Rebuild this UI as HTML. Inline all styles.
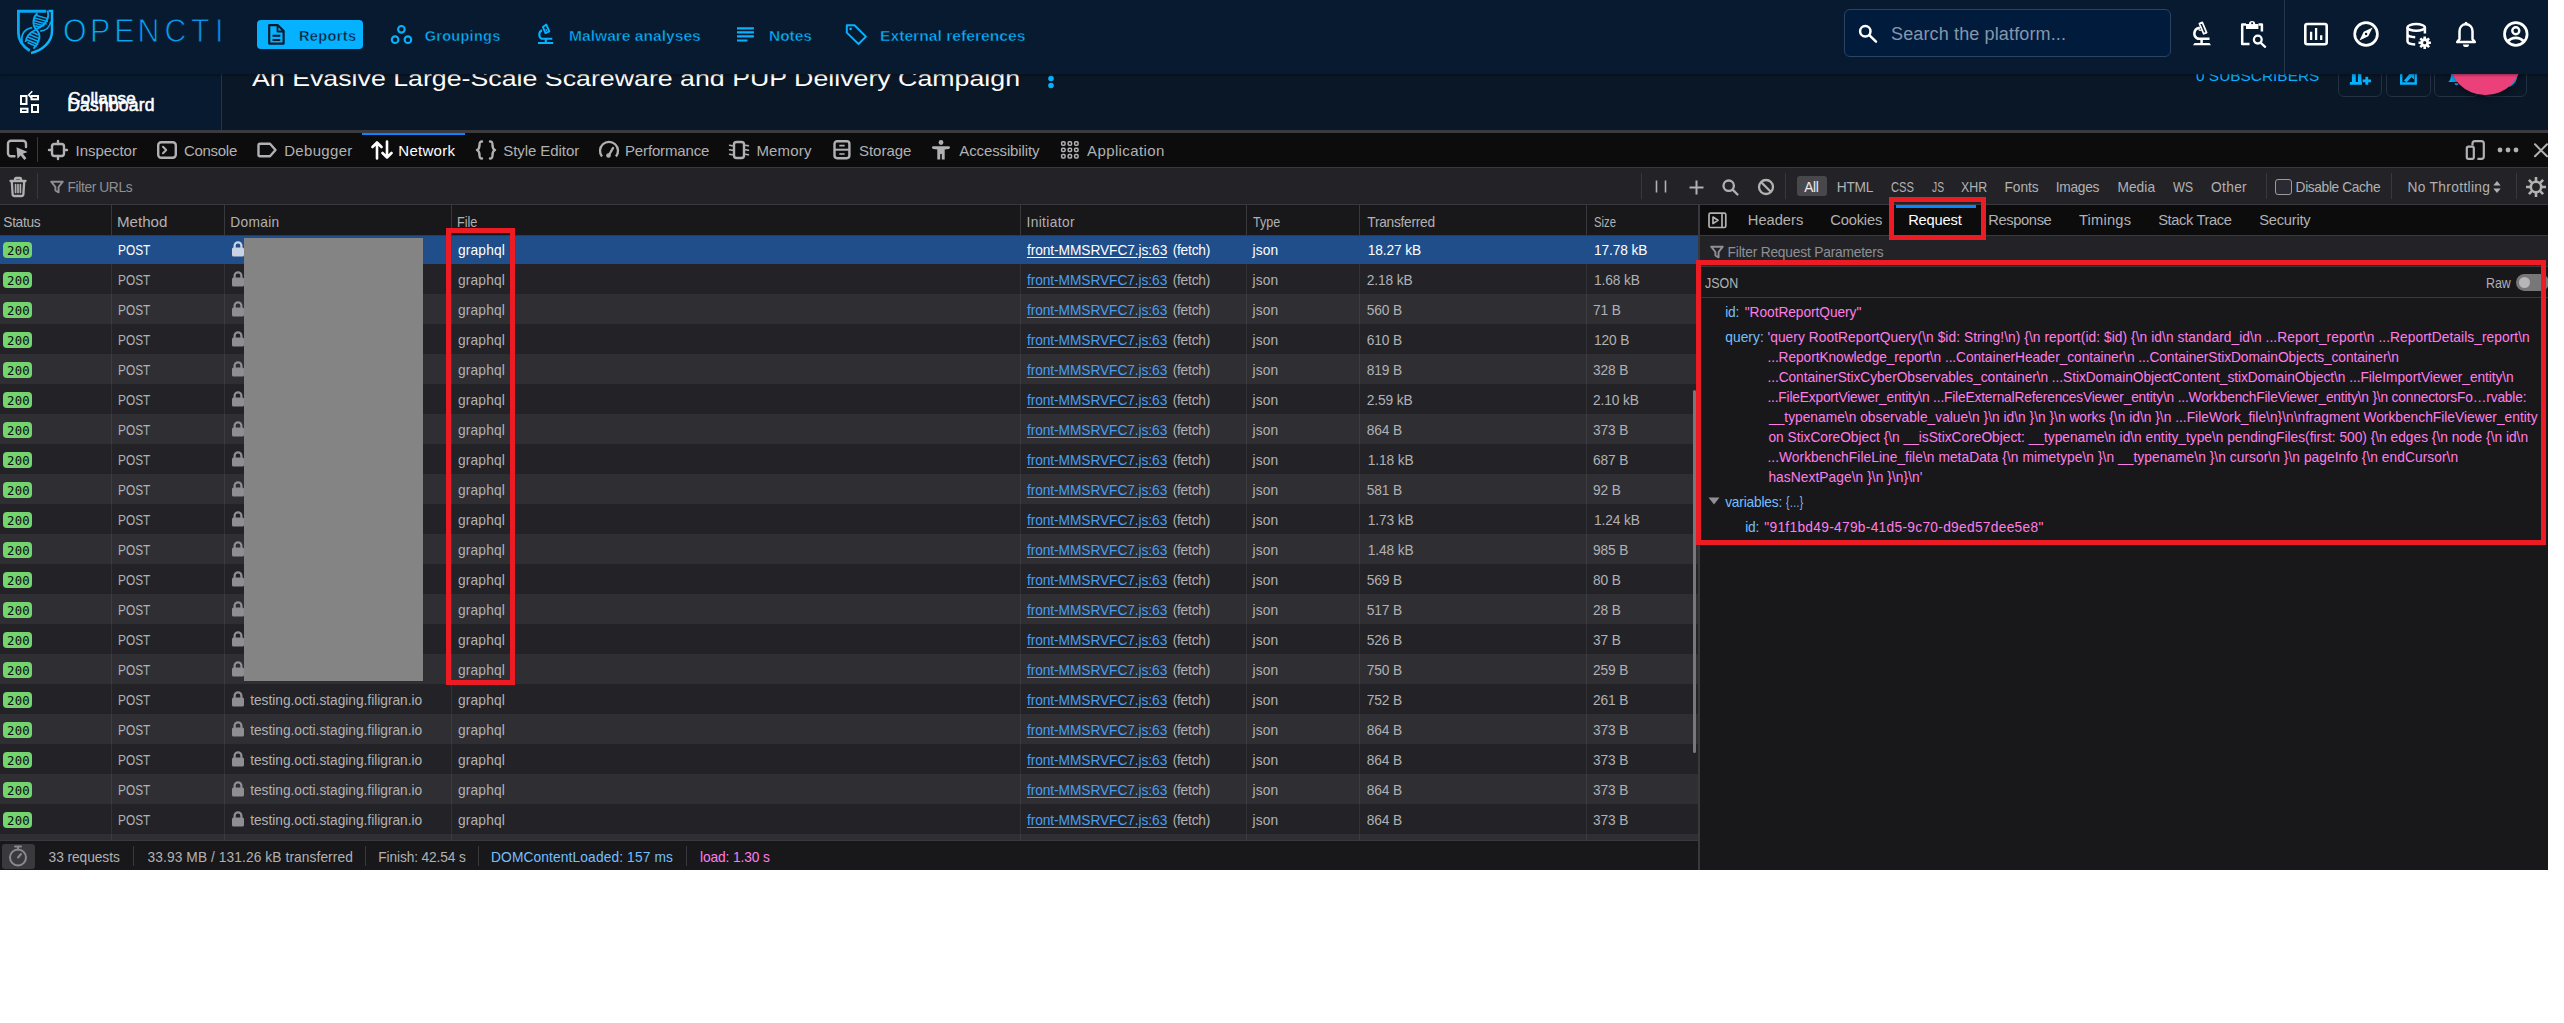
<!DOCTYPE html><html><head><meta charset="utf-8"><title>OpenCTI devtools</title><style>
*{box-sizing:border-box}
html,body{margin:0;padding:0}
body{width:2564px;height:1023px;background:#fff;position:relative;overflow:hidden;font-family:"Liberation Sans",sans-serif}
#app{position:absolute;left:0;top:0;width:2548px;height:870px;overflow:hidden;background:#0a1524}
.abs{position:absolute}
.t{position:absolute;white-space:nowrap}
#main{position:absolute;left:0;top:0;width:2548px;height:130px;background:#0a1727;overflow:hidden}
#side{position:absolute;left:0;top:73px;width:222px;height:57px;background:#071a2f;border-right:1px solid #263549}
#top{position:absolute;left:0;top:0;width:2548px;height:74px;background:#071a2f;box-shadow:0 1px 3px rgba(0,0,0,.45)}
#dt{position:absolute;left:0;top:130px;width:2548px;height:740px;background:#232327;color:#b1b1b3;font-size:14px}
.sep{position:absolute;width:1px;background:#38383d}
.row{position:absolute;left:0;width:1698px;height:30px}
.row.odd{background:#2e2e33}
.row.sel{background:#204e8a;z-index:2}
.badge{position:absolute;left:3px;top:6px;width:29px;height:16px;background:#74d46e;border-radius:4px}
.red{position:absolute;border:5px solid #ed1c24;z-index:5}
</style></head><body><div id="app">
<div id="main">
<div class="t" style="left:252.10px;top:66.00px;font-size:22.5px;line-height:25px;transform:scaleX(1.1886);transform-origin:0 0;color:#fff;">An Evasive Large-Scale Scareware and PUP Delivery Campaign</div>
<svg class="abs" style="left:1046px;top:64px" width="10" height="30" viewBox="0 0 10 30"><circle cx="5" cy="7.500" r="2.800" fill="#06b2ff"/><circle cx="5" cy="14.500" r="2.800" fill="#06b2ff"/><circle cx="5" cy="21.500" r="2.800" fill="#06b2ff"/></svg>
<div class="t" style="left:2196.00px;top:68.00px;font-size:14.5px;line-height:16px;transform:scaleX(1.0627);transform-origin:0 0;color:#06b2ff;">0 SUBSCRIBERS</div>
<div class="abs" style="left:2338px;top:50px;width:44px;height:47px;border:1px solid #233145;border-radius:6px"></div>
<div class="abs" style="left:2386px;top:50px;width:45px;height:47px;border:1px solid #233145;border-radius:6px"></div>
<div class="abs" style="left:2434px;top:50px;width:44.5px;height:47px;border:1px solid #233145;border-radius:6px"></div>
<div class="abs" style="left:2482px;top:50px;width:45px;height:47px;border:1px solid #233145;border-radius:6px"></div>
<svg class="abs" style="left:2340px;top:60px" width="190" height="30" viewBox="2340 60 190 30" fill="#06b2ff"><path d="M2351.900 66h3.900v16h-3.900zM2357.900 66h3.500v16h-3.500zM2349.900 81.900h12v2.800h-12zM2365.400 76.700h2.800v8h-2.800zM2362.600 79.600h8.400v2.700h-8.400z"/><path d="M2401.200 66v17.500h14.500V66" fill="none" stroke="#06b2ff" stroke-width="2.400"/><path d="M2404 80.500l5-6-2.500-2.500h7.500v7.500l-2.500-2.500-5 5.500z"/><path d="M2448 82c2.500-1.500 3-4 3-9s2-8 5.500-8 5.500 3 5.500 8 .5 7.500 3 9zM2454.500 83.200h4a2 2 0 0 1-4 0z"/><circle cx="2506" cy="76" r="10" fill="none" stroke="#06b2ff" stroke-width="2.400"/></svg>
<div class="abs" style="left:2449px;top:22.500px;width:72.500px;height:72.500px;border-radius:50%;background:#ec407a;box-shadow:0 3px 6px rgba(0,0,0,.35)"></div>
</div>
<div id="side">
<svg class="abs" style="left:18px;top:16px" width="24" height="26" viewBox="18 89 24 26" fill="none" stroke="#fff" stroke-width="2"><rect x="21" y="96" width="5.500" height="8"/><rect x="31.500" y="96" width="6.500" height="3.300"/><rect x="32" y="105" width="6" height="7"/><rect x="21" y="108.700" width="6.500" height="3.300"/><path d="M32.300 91.300L28.600 95l3 3" stroke-width="1.500"/></svg>
<div class="t" style="left:68.30px;top:16.00px;font-size:17px;line-height:19px;letter-spacing:0.187px;color:#fff;-webkit-text-stroke:0.55px #fff;">Collapse</div>
<div class="t" style="left:67.30px;top:22.00px;font-size:17.5px;line-height:20px;letter-spacing:0.190px;color:#fff;-webkit-text-stroke:0.55px #fff;">Dashboard</div>
</div>
<div id="top">
<svg class="abs" style="left:10px;top:4px" width="52" height="56" viewBox="10 4 52 56" fill="none" stroke="#08a9f4" stroke-linecap="butt">
<path d="M18.400 9.900V33C18.400 40 23 46.500 29.800 50.800" stroke-width="2.800"/>
<path d="M17 11.250H46.200" stroke-width="3"/>
<path d="M48.500 11.100H52V31C52 42 42.500 50.500 31 53" stroke-width="2.500" stroke="#0db4fb"/>
<path d="M37.500 13.300C32.800 17 32 24.500 36 29.500C40.500 33.500 41 40 33.500 48.600" stroke-width="1.900"/>
<path d="M47.300 10.500C50 17 47 24.500 36 29.500C30 32.500 26 36.500 25.600 42" stroke-width="1.900"/>
<path d="M35.800 15.300L47.800 18.600M34.300 17.900L48 21.600M33.800 20.500L46.800 24.100M34.200 23.100L44.500 26M35.200 25.700L41 27.500M31.500 32L37.800 34.700M29 34.300L39.200 38.600M27.200 36.800L39.300 41.800M26.200 39.500L38.300 44.500M27.500 42.500L36.600 46.500" stroke-width="1.500"/>
<path d="M50.800 21.500C50 27 46 30.300 40.200 31.200" stroke-width="1.700"/>
<path d="M32.300 27.600C25 28.800 20.300 34 22.300 42.800" stroke-width="1.700"/>
</svg>
<svg class="abs" style="left:60px;top:12px" width="170" height="40" viewBox="0 0 170 40"><defs><linearGradient id="lg" x1="0" x2="1"><stop offset="0" stop-color="#00b4ff"/><stop offset="1" stop-color="#0a8de6"/></linearGradient></defs><text transform="scale(0.93,1)" x="3.33 32.15 58.33 83.33 112.47 140.91 166.77" y="30.300" font-family="Liberation Sans, sans-serif" font-size="32.600" fill="url(#lg)" stroke="#071a2f" stroke-width="0.900">OPENCTI</text></svg>
<div class="abs" style="left:257px;top:20px;width:106px;height:29px;border-radius:4px;background:#06b2ff"></div>
<svg class="abs" style="left:267px;top:23px" width="19" height="23" viewBox="0 0 19 23" fill="none" stroke="#071a2f" stroke-width="2.200" stroke-linejoin="round"><path d="M2.200 2.200h8.600l5.800 5.800v12.600H2.200z"/><path d="M10.500 2.500v6h6" stroke-width="1.800"/><path d="M5.500 12.700h7.800M5.500 17h7.800" stroke-width="2"/></svg>
<div class="t" style="left:298.90px;top:28.00px;font-size:14.5px;line-height:16px;letter-spacing:0.413px;color:#071a2f;font-weight:700;-webkit-text-stroke:0.45px #06b2ff;">Reports</div>
<svg class="abs" style="left:390px;top:24px" width="24" height="22" viewBox="390 24 24 22" fill="none" stroke="#06b2ff" stroke-width="2.100"><circle cx="401.400" cy="29.300" r="3.300"/><circle cx="395.100" cy="39.700" r="3.300"/><circle cx="407.900" cy="39.700" r="3.300"/></svg>
<div class="t" style="left:424.70px;top:28.00px;font-size:14.5px;line-height:16px;letter-spacing:0.283px;color:#06b2ff;font-weight:700;-webkit-text-stroke:0.45px #071a2f;">Groupings</div>
<svg class="abs" style="left:535px;top:22px" width="22" height="24" viewBox="535 22 22 24" fill="none" stroke="#06b2ff" stroke-width="1.900" stroke-linejoin="round"><path d="M546.300 24.600l3 6.800-3.800 1.700-2.600-6z"/><path d="M542 30.300c-3.300 1.500-3.800 6.500-.3 8.600" stroke-width="2.100"/><path d="M541.300 38.800h11M545.800 39v3.300M538 43h15.200" stroke-width="2.100"/><circle cx="546.300" cy="30" r="1" fill="#06b2ff" stroke="none"/></svg>
<div class="t" style="left:568.50px;top:28.00px;font-size:14.5px;line-height:16px;transform:scaleX(1.0755);transform-origin:0 0;color:#06b2ff;font-weight:700;-webkit-text-stroke:0.45px #071a2f;">Malware analyses</div>
<svg class="abs" style="left:737px;top:26px" width="18" height="17" viewBox="737 26 18 17" stroke="#06b2ff" stroke-width="2.200" fill="none"><path d="M737 28.400h16.900M737 32.400h16.900M737 36.400h16.900M737 40.500h10.500"/></svg>
<div class="t" style="left:768.60px;top:28.00px;font-size:14.5px;line-height:16px;transform:scaleX(1.0641);transform-origin:0 0;color:#06b2ff;font-weight:700;-webkit-text-stroke:0.45px #071a2f;">Notes</div>
<svg class="abs" style="left:844px;top:22px" width="25" height="25" viewBox="844 22 25 25" fill="none" stroke="#06b2ff" stroke-width="2" stroke-linejoin="round"><path d="M846.800 25.200h7.700l11.400 11.400-7.400 7.400-11.700-11.400z"/><circle cx="850.600" cy="28.900" r="1.300" fill="#06b2ff" stroke="none"/></svg>
<div class="t" style="left:879.60px;top:28.00px;font-size:14.5px;line-height:16px;transform:scaleX(1.0807);transform-origin:0 0;color:#06b2ff;font-weight:700;-webkit-text-stroke:0.45px #071a2f;">External references</div>
<div class="abs" style="left:1844px;top:9px;width:327px;height:48px;border:1px solid #2b4561;border-radius:6px;background:#011b3d"></div>
<svg class="abs" style="left:1857px;top:23px" width="22" height="22" viewBox="0 0 22 22" fill="none" stroke="#fff" stroke-width="2.500"><circle cx="8.300" cy="8.200" r="5.200"/><path d="M12.300 12.200l6.700 6.500" stroke-linecap="round"/></svg>
<div class="t" style="left:1891.00px;top:24.00px;font-size:18px;line-height:20px;letter-spacing:0.139px;color:#8796aa;">Search the platform...</div>
<svg class="abs" style="left:2189px;top:19px" width="26" height="30" viewBox="2189 19 26 30" fill="none" stroke="#fff" stroke-linejoin="round"><path d="M2202.300 22.400l4.300 10.200-2.900 1.200-4.300-10.200z" stroke-width="1.700"/><circle cx="2200.200" cy="29" r="1.900" fill="#fff" stroke="none"/><circle cx="2200.200" cy="29" r=".8" fill="#071a2f" stroke="none"/><path d="M2199.500 27.800c-6 1-7.300 9 -1 11.200" stroke-width="2.600"/><path d="M2197.500 38.800h12M2201.600 39v4" stroke-width="2.500"/><path d="M2194.500 43l-1.500 2.300h18l-1.500-2.300z" fill="#fff" stroke="none"/></svg>
<svg class="abs" style="left:2239px;top:18px" width="30" height="32" viewBox="2239 18 30 32" fill="none" stroke="#fff" stroke-width="2.500" stroke-linejoin="round"><path d="M2246 24.500h-3.800v19.600h7.300M2258.500 24.500h3.400v7"/><path d="M2246 24h12.400v5H2246z" fill="#fff" stroke="none"/><circle cx="2252.100" cy="24" r="3.100" fill="#fff" stroke="none"/><circle cx="2252.100" cy="23.300" r="1" fill="#071a2f" stroke="none"/><circle cx="2257.800" cy="39.600" r="3.900" stroke-width="2.300"/><path d="M2260.800 42.800l4.300 4" stroke-width="2.300" stroke-linecap="round"/></svg>
<div class="abs" style="left:2284px;top:0;width:1px;height:74px;background:#26364a"></div>
<svg class="abs" style="left:2302px;top:21px" width="28" height="26" viewBox="2302 21 28 26" fill="none" stroke="#fff" stroke-width="2.600"><rect x="2305.300" y="24.050" width="21.400" height="20.250" rx="2"/><path d="M2311.100 31.800v8.200M2316.100 28v12M2321.200 35.200v4.800" stroke-width="2.300"/></svg>
<svg class="abs" style="left:2352px;top:20px" width="28" height="28" viewBox="2352 20 28 28" fill="none" stroke="#fff" stroke-width="2.700"><circle cx="2366.050" cy="34" r="11.350"/><path d="M2372.600 27.400l-4.300 8.900-8.900 4.300 4.300-8.900z" fill="#fff" stroke="none"/><circle cx="2366.050" cy="34" r="1.250" fill="#071a2f" stroke="none"/></svg>
<svg class="abs" style="left:2403px;top:20px" width="32" height="32" viewBox="2403 20 32 32" fill="none" stroke="#fff" stroke-width="2.500"><ellipse cx="2416.200" cy="27.400" rx="8.700" ry="3.300"/><path d="M2407.500 27.400v13.800c0 1.700 3.200 3 7.700 3.200M2407.500 34c0 1.700 3.200 3 7.700 3.200M2424.900 27.400v6"/><circle cx="2424.700" cy="42.700" r="3" stroke-width="2.800"/><path d="M2424.700 36.500v2.500M2424.700 46.400v2.500M2418.500 42.700h2.500M2428.400 42.700h2.500M2420.300 38.300l1.800 1.800M2427.300 45.300l1.800 1.800M2420.300 47.100l1.800-1.800M2427.300 40.100l1.800-1.800" stroke-width="2.600"/></svg>
<svg class="abs" style="left:2453px;top:19px" width="26" height="30" viewBox="2453 19 26 30" fill="none" stroke="#fff" stroke-width="2.500" stroke-linejoin="round"><path d="M2466 24.300c-3.800 0-6.500 2.900-6.500 7v7.700l-2.300 3h17.600l-2.300-3v-7.700c0-4.100-2.700-7-6.500-7z"/><path d="M2463 44.500a3 2.600 0 0 0 6 0z" fill="#fff" stroke="none"/><circle cx="2466" cy="23.200" r="1.500" fill="#fff" stroke="none"/></svg>
<svg class="abs" style="left:2501px;top:20px" width="30" height="28" viewBox="2501 20 30 28" fill="none" stroke="#fff" stroke-width="2.700"><circle cx="2515.800" cy="34" r="11.300"/><circle cx="2515.800" cy="30.800" r="3.500" stroke-width="2.400"/><path d="M2507.600 41.800c2-2.700 4.800-4 8.200-4s6.200 1.300 8.200 4" stroke-width="2.800"/></svg>
</div>
<div id="dt">
<div class="abs" style="left:0;top:0;width:2548px;height:3px;background:#3a3a3f"></div>
<div class="abs" style="left:0;top:3px;width:2548px;height:34px;background:#0c0c0d">
<div class="abs" style="left:0;top:34px;width:2548px;height:1px;background:#38383d"></div>
<svg class="abs" style="left:6px;top:6px" width="24" height="22" viewBox="0 0 24 22" fill="none" stroke="#b1b1b3" stroke-width="2.400" stroke-linecap="round"><path d="M8.500 17.300H5a3 3 0 0 1-3-3v-9.500a3 3 0 0 1 3-3h12a3 3 0 0 1 3 3V8"/><path d="M10.500 8.300l11.200 4.700-4.800 1.700 3.600 4.600-2.200 1.700-3.600-4.600-3.200 3.400z" fill="#b1b1b3" stroke="none"/></svg>
<div class="sep" style="left:37px;top:4px;height:25px"></div>
<svg class="abs" style="left:47px;top:6px" width="22" height="22" viewBox="0 0 22 22" fill="none" stroke="#b1b1b3" stroke-width="2.400" stroke-linejoin="round"><rect x="5" y="5" width="12" height="12" rx="2.500"/><path d="M11 2v3M11 17v3M2 11h3M17 11h3" stroke-linecap="round"/></svg>
<div class="t" style="left:75.50px;top:9.00px;font-size:15px;line-height:17px;letter-spacing:-0.038px;color:#b1b1b3;">Inspector</div>
<svg class="abs" style="left:156px;top:6px" width="22" height="22" viewBox="0 0 22 22" fill="none" stroke="#b1b1b3" stroke-width="2.400" stroke-linejoin="round"><rect x="2.200" y="3.200" width="17.600" height="15.600" rx="3"/><path d="M7 7.800l3.200 3.200-3.200 3.200" stroke-width="2" stroke-linecap="round"/></svg>
<div class="t" style="left:183.90px;top:9.00px;font-size:15px;line-height:17px;letter-spacing:-0.282px;color:#b1b1b3;">Console</div>
<svg class="abs" style="left:256px;top:6px" width="22" height="22" viewBox="0 0 22 22" fill="none" stroke="#b1b1b3" stroke-width="2.400" stroke-linejoin="round"><path d="M4 4.700h10l5.500 6.300-5.500 6.300H4a1.500 1.500 0 0 1-1.500-1.500V6.200A1.500 1.500 0 0 1 4 4.700z"/></svg>
<div class="t" style="left:284.20px;top:9.00px;font-size:15px;line-height:17px;letter-spacing:0.316px;color:#b1b1b3;">Debugger</div>
<svg class="abs" style="left:371px;top:6px" width="22" height="22" viewBox="0 0 22 22" fill="none" stroke="#fff" stroke-width="2.400" stroke-linejoin="round"><path d="M6 19.500V3.500M1.500 8L6 3.500l4.500 4.500M16 2.500v16M11.500 14L16 18.500l4.500-4.500" stroke-width="2.600" stroke-linecap="round"/></svg>
<div class="t" style="left:398.30px;top:9.00px;font-size:15px;line-height:17px;letter-spacing:0.265px;color:#fff;">Network</div>
<svg class="abs" style="left:475px;top:6px" width="22" height="22" viewBox="0 0 22 22" fill="none" stroke="#b1b1b3" stroke-width="2.400" stroke-linejoin="round"><path d="M7 2.500C4.500 2.500 4.500 4 4.500 6s0 4-2.500 5c2.500 1 2.500 3 2.500 5s0 3.500 2.500 3.500M15 2.500c2.500 0 2.500 1.500 2.500 3.500s0 4 2.500 5c-2.500 1-2.500 3-2.500 5s0 3.500-2.500 3.500" stroke-linecap="round"/></svg>
<div class="t" style="left:503.30px;top:9.00px;font-size:15px;line-height:17px;letter-spacing:-0.073px;color:#b1b1b3;">Style Editor</div>
<svg class="abs" style="left:598px;top:6px" width="22" height="22" viewBox="0 0 22 22" fill="none" stroke="#b1b1b3" stroke-width="2.400" stroke-linejoin="round"><path d="M4 17.500a9 9 0 1 1 14 0" stroke-width="2.300"/><path d="M11 16l4-7" stroke-linecap="round"/><circle cx="10.500" cy="16.500" r="2.300" fill="#b1b1b3" stroke="none"/></svg>
<div class="t" style="left:625.00px;top:9.00px;font-size:15px;line-height:17px;letter-spacing:-0.153px;color:#b1b1b3;">Performance</div>
<svg class="abs" style="left:728px;top:6px" width="22" height="22" viewBox="0 0 22 22" fill="none" stroke="#b1b1b3" stroke-width="2.400" stroke-linejoin="round"><rect x="6" y="3" width="10" height="16" rx="2.500"/><path d="M1 6.500c2-1 2 1 4 0M1 11c2-1 2 1 4 0M1 15.500c2-1 2 1 4 0M17 6.500c2-1 2 1 4 0M17 11c2-1 2 1 4 0M17 15.500c2-1 2 1 4 0" stroke-width="1.500"/></svg>
<div class="t" style="left:756.40px;top:9.00px;font-size:15px;line-height:17px;letter-spacing:0.186px;color:#b1b1b3;">Memory</div>
<svg class="abs" style="left:832px;top:6px" width="22" height="22" viewBox="0 0 22 22" fill="none" stroke="#b1b1b3" stroke-width="2.400" stroke-linejoin="round"><rect x="2.500" y="2.300" width="14.900" height="16.900" rx="2.600"/><path d="M2.500 10.700h14.900" stroke-width="2"/><path d="M7.300 6.600h5.300M7.300 15h5.300" stroke-width="1.600"/></svg>
<div class="t" style="left:859.00px;top:9.00px;font-size:15px;line-height:17px;letter-spacing:-0.032px;color:#b1b1b3;">Storage</div>
<svg class="abs" style="left:930px;top:6px" width="22" height="22" viewBox="0 0 22 22" fill="none" stroke="#b1b1b3" stroke-width="2.400" stroke-linejoin="round"><g fill="#b1b1b3" stroke="none"><circle cx="11" cy="3.500" r="2.400"/><path d="M3.300 7.300h15.400a1.300 1.300 0 0 1 0 2.600l-4 .6v10h-2.900v-5.500h-1.600v5.500H7.300v-10l-4-.6a1.300 1.300 0 0 1 0-2.600z"/></g></svg>
<div class="t" style="left:959.30px;top:9.00px;font-size:15px;line-height:17px;letter-spacing:-0.124px;color:#b1b1b3;">Accessibility</div>
<svg class="abs" style="left:1059px;top:6px" width="22" height="22" viewBox="0 0 22 22" fill="none" stroke="#b1b1b3" stroke-width="2.400" stroke-linejoin="round"><g stroke-width="1.500"><rect x="2.65" y="2.85" width="3.400" height="3.400" rx="1"/><rect x="9.15" y="2.85" width="3.400" height="3.400" rx="1"/><rect x="15.65" y="2.85" width="3.400" height="3.400" rx="1"/><rect x="2.65" y="9.20" width="3.400" height="3.400" rx="1"/><rect x="9.15" y="9.20" width="3.400" height="3.400" rx="1"/><rect x="15.65" y="9.20" width="3.400" height="3.400" rx="1"/><rect x="2.65" y="15.55" width="3.400" height="3.400" rx="1"/><rect x="9.15" y="15.55" width="3.400" height="3.400" rx="1"/><rect x="15.65" y="15.55" width="3.400" height="3.400" rx="1"/></g></svg>
<div class="t" style="left:1087.00px;top:9.00px;font-size:15px;line-height:17px;letter-spacing:0.396px;color:#b1b1b3;">Application</div>
<div class="abs" style="left:362px;top:0;width:103px;height:2px;background:#0a84ff"></div>
<svg class="abs" style="left:2464px;top:5px" width="24" height="24" viewBox="2464 138 24 24" fill="none" stroke="#b1b1b3" stroke-width="2.200" stroke-linejoin="round"><path d="M2472.500 145.500v-2a2.400 2.400 0 0 1 2.400-2.400h6.500a2.400 2.400 0 0 1 2.400 2.400v13a2.400 2.400 0 0 1-2.400 2.400h-4"/><rect x="2466.800" y="146.600" width="7" height="12.300" rx="1.600"/></svg>
<svg class="abs" style="left:2496px;top:13px" width="24" height="8" viewBox="0 0 24 8" fill="#b1b1b3"><circle cx="4" cy="4" r="2.400"/><circle cx="12" cy="4" r="2.400"/><circle cx="20" cy="4" r="2.400"/></svg>
<svg class="abs" style="left:2532px;top:9px" width="18" height="16" viewBox="2532 142 18 16" stroke="#b1b1b3" stroke-width="2" stroke-linecap="round"><path d="M2535 144.300l12 12M2547 144.300l-12 12"/></svg>
</div>
<div class="abs" style="left:0;top:38px;width:2548px;height:36px;background:#232327">
<div class="abs" style="left:0;top:36px;width:2548px;height:1px;background:#38383d"></div>
<svg class="abs" style="left:9px;top:8px" width="18" height="22" viewBox="0 0 18 22" fill="none" stroke="#b1b1b3" stroke-width="2.300" stroke-linejoin="round" stroke-linecap="round"><path d="M1.500 5h15M6 4.500V3a1 1 0 0 1 1-1h4a1 1 0 0 1 1 1v1.500M2.800 5.500l.8 12.500a2 2 0 0 0 2 2h6.800a2 2 0 0 0 2-2l.8-12.500"/><path d="M6.600 8.500v8M9 8.500v8M11.400 8.500v8" stroke-width="1.700"/></svg>
<div class="sep" style="left:37px;top:5px;height:26px"></div>
<svg class="abs" style="left:50px;top:12px" width="14" height="14" viewBox="0 0 14 14" fill="none" stroke="#8f8f94" stroke-width="1.900" stroke-linejoin="round"><path d="M1.200 1.700h11.600L8.600 7v5.300l-3.200-1.800V7z"/></svg>
<div class="t" style="left:67.60px;top:12.00px;font-size:13.75px;line-height:15px;letter-spacing:-0.378px;color:#8f8f94;">Filter URLs</div>
<div class="sep" style="left:1641px;top:5px;height:26px"></div>
<svg class="abs" style="left:1654px;top:12px" width="14" height="14" viewBox="0 0 14 14" stroke="#b1b1b3" stroke-width="1.600"><path d="M2.500 0.500v12M11.500 0.500v12"/></svg>
<svg class="abs" style="left:1687.500px;top:11px" width="17" height="17" viewBox="0 0 17 17" stroke="#b1b1b3" stroke-width="2"><path d="M8.500 1.500v14M1.500 8.500h14"/></svg>
<svg class="abs" style="left:1721px;top:10px" width="20" height="20" viewBox="0 0 20 20" fill="none" stroke="#b1b1b3" stroke-width="2.300"><circle cx="7.700" cy="7.700" r="5.200"/><path d="M11.600 11.600l4.900 4.900" stroke-linecap="round"/></svg>
<svg class="abs" style="left:1755.500px;top:9px" width="20" height="20" viewBox="0 0 20 20" fill="none" stroke="#b1b1b3" stroke-width="2.300"><circle cx="10" cy="10" r="7"/><path d="M5 5l10 10"/></svg>
<div class="sep" style="left:1785px;top:5px;height:26px"></div>
<div class="abs" style="left:1797px;top:8px;width:30px;height:20px;background:#48484c;border-radius:3px"></div>
<div class="t" style="left:1804.20px;top:12.00px;font-size:13.75px;line-height:15px;letter-spacing:-0.313px;color:#ededf0;">All</div>
<div class="t" style="left:1836.70px;top:12.00px;font-size:13.75px;line-height:15px;letter-spacing:-0.228px;color:#b1b1b3;">HTML</div>
<div class="t" style="left:1891.20px;top:12.00px;font-size:13.75px;line-height:15px;transform:scaleX(0.8149);transform-origin:0 0;color:#b1b1b3;">CSS</div>
<div class="t" style="left:1932.10px;top:12.00px;font-size:13.75px;line-height:15px;transform:scaleX(0.7496);transform-origin:0 0;color:#b1b1b3;">JS</div>
<div class="t" style="left:1960.90px;top:12.00px;font-size:13.75px;line-height:15px;transform:scaleX(0.9003);transform-origin:0 0;color:#b1b1b3;">XHR</div>
<div class="t" style="left:2004.40px;top:12.00px;font-size:13.75px;line-height:15px;letter-spacing:-0.028px;color:#b1b1b3;">Fonts</div>
<div class="t" style="left:2055.80px;top:12.00px;font-size:13.75px;line-height:15px;letter-spacing:-0.303px;color:#b1b1b3;">Images</div>
<div class="t" style="left:2117.40px;top:12.00px;font-size:13.75px;line-height:15px;letter-spacing:0.049px;color:#b1b1b3;">Media</div>
<div class="t" style="left:2172.90px;top:12.00px;font-size:13.75px;line-height:15px;transform:scaleX(0.9146);transform-origin:0 0;color:#b1b1b3;">WS</div>
<div class="t" style="left:2211.00px;top:12.00px;font-size:13.75px;line-height:15px;letter-spacing:0.323px;color:#b1b1b3;">Other</div>
<div class="sep" style="left:2266px;top:5px;height:26px"></div>
<div class="abs" style="left:2275px;top:11px;width:17px;height:16px;border:1.500px solid #9a9aa2;border-radius:3px;background:#2b2a33"></div>
<div class="t" style="left:2295.60px;top:12.00px;font-size:13.75px;line-height:15px;letter-spacing:-0.373px;color:#b1b1b3;">Disable Cache</div>
<div class="sep" style="left:2391px;top:5px;height:26px"></div>
<div class="t" style="left:2407.40px;top:12.00px;font-size:13.75px;line-height:15px;letter-spacing:0.344px;color:#b1b1b3;">No Throttling</div>
<svg class="abs" style="left:2493px;top:13px" width="8" height="12" viewBox="0 0 8 12" fill="#b1b1b3"><path d="M4 0l3.700 4.500H.3zM4 12l3.700-4.500H.3z"/></svg>
<div class="sep" style="left:2516px;top:5px;height:26px"></div>
<svg class="abs" style="left:2524px;top:7px" width="24" height="24" viewBox="0 0 24 24" fill="none" stroke="#b1b1b3"><circle cx="12" cy="12" r="5.200" stroke-width="2.600"/><path d="M12 2v4.500M12 17.500v4.500M2 12h4.500M17.500 12h4.500M4.900 4.900l3.200 3.200M15.900 15.900l3.200 3.200M4.900 19.100l3.200-3.200M15.900 8.100l3.200-3.200" stroke-width="2.600"/></svg>
</div>
<div class="abs" style="left:0;top:75px;width:1698px;height:635px;overflow:hidden;background:#232327;z-index:0">
<div class="row sel" style="top:29px"><div class="badge" style="top:8px"></div>
<div class="t" style="left:7.00px;top:10.00px;font-size:12.35px;line-height:14px;letter-spacing:0.218px;color:#0c0c0d;font-family:&quot;DejaVu Sans Mono&quot;,monospace;">200</div>
<div class="t" style="left:118.04px;top:9.00px;font-size:13.75px;line-height:15px;transform:scaleX(0.8640);transform-origin:0 0;color:#fff;">POST</div>
<svg class="abs" style="left:232px;top:7.300000000000011px" width="12" height="16" viewBox="0 0 12 16"><path d="M2.600 7V4.700a3.400 3.400 0 0 1 6.800 0V7" fill="none" stroke="#c9d3e3" stroke-width="2.200"/><rect x="0" y="6.500" width="12" height="9" rx="1.600" fill="#c9d3e3"/></svg>
<div class="t" style="left:458.00px;top:9.00px;font-size:13.75px;line-height:15px;letter-spacing:0.164px;color:#fff;">graphql</div>
<div class="t" style="left:1026.90px;top:9.00px;font-size:13.75px;line-height:15px;letter-spacing:-0.075px;color:#fff;text-decoration:underline;text-underline-offset:1.500px;">front-MMSRVFC7.js:63</div>
<div class="t" style="left:1172.70px;top:9.00px;font-size:13.75px;line-height:15px;letter-spacing:-0.231px;color:#fff;">(fetch)</div>
<div class="t" style="left:1252.50px;top:9.00px;font-size:13.75px;line-height:15px;letter-spacing:0.141px;color:#fff;">json</div>
<div class="t" style="left:1367.70px;top:9.00px;font-size:13.75px;line-height:15px;letter-spacing:-0.100px;color:#fff;">18.27 kB</div>
<div class="t" style="left:1593.90px;top:9.00px;font-size:13.75px;line-height:15px;letter-spacing:-0.100px;color:#fff;">17.78 kB</div>
</div>
<div class="row" style="top:59px"><div class="badge" style="top:8px"></div>
<div class="t" style="left:7.00px;top:10.00px;font-size:12.35px;line-height:14px;letter-spacing:0.218px;color:#0c0c0d;font-family:&quot;DejaVu Sans Mono&quot;,monospace;">200</div>
<div class="t" style="left:118.04px;top:9.00px;font-size:13.75px;line-height:15px;transform:scaleX(0.8640);transform-origin:0 0;color:#b1b1b3;">POST</div>
<svg class="abs" style="left:232px;top:6.699999999999989px" width="12" height="16" viewBox="0 0 12 16"><path d="M2.600 7V4.700a3.400 3.400 0 0 1 6.800 0V7" fill="none" stroke="#8f8f93" stroke-width="2.200"/><rect x="0" y="6.500" width="12" height="9" rx="1.600" fill="#8f8f93"/></svg>
<div class="t" style="left:458.00px;top:9.00px;font-size:13.75px;line-height:15px;letter-spacing:0.164px;color:#b1b1b3;">graphql</div>
<div class="t" style="left:1026.90px;top:9.00px;font-size:13.75px;line-height:15px;letter-spacing:-0.075px;color:#4a9ff0;text-decoration:underline;text-underline-offset:1.500px;">front-MMSRVFC7.js:63</div>
<div class="t" style="left:1172.70px;top:9.00px;font-size:13.75px;line-height:15px;letter-spacing:-0.231px;color:#b1b1b3;">(fetch)</div>
<div class="t" style="left:1252.50px;top:9.00px;font-size:13.75px;line-height:15px;letter-spacing:0.141px;color:#b1b1b3;">json</div>
<div class="t" style="left:1366.70px;top:9.00px;font-size:13.75px;line-height:15px;letter-spacing:-0.100px;color:#b1b1b3;">2.18 kB</div>
<div class="t" style="left:1593.90px;top:9.00px;font-size:13.75px;line-height:15px;letter-spacing:-0.100px;color:#b1b1b3;">1.68 kB</div>
</div>
<div class="row odd" style="top:89px"><div class="badge" style="top:8px"></div>
<div class="t" style="left:7.00px;top:10.00px;font-size:12.35px;line-height:14px;letter-spacing:0.218px;color:#0c0c0d;font-family:&quot;DejaVu Sans Mono&quot;,monospace;">200</div>
<div class="t" style="left:118.04px;top:9.00px;font-size:13.75px;line-height:15px;transform:scaleX(0.8640);transform-origin:0 0;color:#b1b1b3;">POST</div>
<svg class="abs" style="left:232px;top:6.699999999999989px" width="12" height="16" viewBox="0 0 12 16"><path d="M2.600 7V4.700a3.400 3.400 0 0 1 6.800 0V7" fill="none" stroke="#8f8f93" stroke-width="2.200"/><rect x="0" y="6.500" width="12" height="9" rx="1.600" fill="#8f8f93"/></svg>
<div class="t" style="left:458.00px;top:9.00px;font-size:13.75px;line-height:15px;letter-spacing:0.164px;color:#b1b1b3;">graphql</div>
<div class="t" style="left:1026.90px;top:9.00px;font-size:13.75px;line-height:15px;letter-spacing:-0.075px;color:#4a9ff0;text-decoration:underline;text-underline-offset:1.500px;">front-MMSRVFC7.js:63</div>
<div class="t" style="left:1172.70px;top:9.00px;font-size:13.75px;line-height:15px;letter-spacing:-0.231px;color:#b1b1b3;">(fetch)</div>
<div class="t" style="left:1252.50px;top:9.00px;font-size:13.75px;line-height:15px;letter-spacing:0.141px;color:#b1b1b3;">json</div>
<div class="t" style="left:1366.70px;top:9.00px;font-size:13.75px;line-height:15px;letter-spacing:-0.100px;color:#b1b1b3;">560 B</div>
<div class="t" style="left:1592.90px;top:9.00px;font-size:13.75px;line-height:15px;letter-spacing:-0.100px;color:#b1b1b3;">71 B</div>
</div>
<div class="row" style="top:119px"><div class="badge" style="top:8px"></div>
<div class="t" style="left:7.00px;top:10.00px;font-size:12.35px;line-height:14px;letter-spacing:0.218px;color:#0c0c0d;font-family:&quot;DejaVu Sans Mono&quot;,monospace;">200</div>
<div class="t" style="left:118.04px;top:9.00px;font-size:13.75px;line-height:15px;transform:scaleX(0.8640);transform-origin:0 0;color:#b1b1b3;">POST</div>
<svg class="abs" style="left:232px;top:6.699999999999989px" width="12" height="16" viewBox="0 0 12 16"><path d="M2.600 7V4.700a3.400 3.400 0 0 1 6.800 0V7" fill="none" stroke="#8f8f93" stroke-width="2.200"/><rect x="0" y="6.500" width="12" height="9" rx="1.600" fill="#8f8f93"/></svg>
<div class="t" style="left:458.00px;top:9.00px;font-size:13.75px;line-height:15px;letter-spacing:0.164px;color:#b1b1b3;">graphql</div>
<div class="t" style="left:1026.90px;top:9.00px;font-size:13.75px;line-height:15px;letter-spacing:-0.075px;color:#4a9ff0;text-decoration:underline;text-underline-offset:1.500px;">front-MMSRVFC7.js:63</div>
<div class="t" style="left:1172.70px;top:9.00px;font-size:13.75px;line-height:15px;letter-spacing:-0.231px;color:#b1b1b3;">(fetch)</div>
<div class="t" style="left:1252.50px;top:9.00px;font-size:13.75px;line-height:15px;letter-spacing:0.141px;color:#b1b1b3;">json</div>
<div class="t" style="left:1366.70px;top:9.00px;font-size:13.75px;line-height:15px;letter-spacing:-0.100px;color:#b1b1b3;">610 B</div>
<div class="t" style="left:1593.90px;top:9.00px;font-size:13.75px;line-height:15px;letter-spacing:-0.100px;color:#b1b1b3;">120 B</div>
</div>
<div class="row odd" style="top:149px"><div class="badge" style="top:8px"></div>
<div class="t" style="left:7.00px;top:10.00px;font-size:12.35px;line-height:14px;letter-spacing:0.218px;color:#0c0c0d;font-family:&quot;DejaVu Sans Mono&quot;,monospace;">200</div>
<div class="t" style="left:118.04px;top:9.00px;font-size:13.75px;line-height:15px;transform:scaleX(0.8640);transform-origin:0 0;color:#b1b1b3;">POST</div>
<svg class="abs" style="left:232px;top:6.699999999999989px" width="12" height="16" viewBox="0 0 12 16"><path d="M2.600 7V4.700a3.400 3.400 0 0 1 6.800 0V7" fill="none" stroke="#8f8f93" stroke-width="2.200"/><rect x="0" y="6.500" width="12" height="9" rx="1.600" fill="#8f8f93"/></svg>
<div class="t" style="left:458.00px;top:9.00px;font-size:13.75px;line-height:15px;letter-spacing:0.164px;color:#b1b1b3;">graphql</div>
<div class="t" style="left:1026.90px;top:9.00px;font-size:13.75px;line-height:15px;letter-spacing:-0.075px;color:#4a9ff0;text-decoration:underline;text-underline-offset:1.500px;">front-MMSRVFC7.js:63</div>
<div class="t" style="left:1172.70px;top:9.00px;font-size:13.75px;line-height:15px;letter-spacing:-0.231px;color:#b1b1b3;">(fetch)</div>
<div class="t" style="left:1252.50px;top:9.00px;font-size:13.75px;line-height:15px;letter-spacing:0.141px;color:#b1b1b3;">json</div>
<div class="t" style="left:1366.70px;top:9.00px;font-size:13.75px;line-height:15px;letter-spacing:-0.100px;color:#b1b1b3;">819 B</div>
<div class="t" style="left:1592.90px;top:9.00px;font-size:13.75px;line-height:15px;letter-spacing:-0.100px;color:#b1b1b3;">328 B</div>
</div>
<div class="row" style="top:179px"><div class="badge" style="top:8px"></div>
<div class="t" style="left:7.00px;top:10.00px;font-size:12.35px;line-height:14px;letter-spacing:0.218px;color:#0c0c0d;font-family:&quot;DejaVu Sans Mono&quot;,monospace;">200</div>
<div class="t" style="left:118.04px;top:9.00px;font-size:13.75px;line-height:15px;transform:scaleX(0.8640);transform-origin:0 0;color:#b1b1b3;">POST</div>
<svg class="abs" style="left:232px;top:6.699999999999989px" width="12" height="16" viewBox="0 0 12 16"><path d="M2.600 7V4.700a3.400 3.400 0 0 1 6.800 0V7" fill="none" stroke="#8f8f93" stroke-width="2.200"/><rect x="0" y="6.500" width="12" height="9" rx="1.600" fill="#8f8f93"/></svg>
<div class="t" style="left:458.00px;top:9.00px;font-size:13.75px;line-height:15px;letter-spacing:0.164px;color:#b1b1b3;">graphql</div>
<div class="t" style="left:1026.90px;top:9.00px;font-size:13.75px;line-height:15px;letter-spacing:-0.075px;color:#4a9ff0;text-decoration:underline;text-underline-offset:1.500px;">front-MMSRVFC7.js:63</div>
<div class="t" style="left:1172.70px;top:9.00px;font-size:13.75px;line-height:15px;letter-spacing:-0.231px;color:#b1b1b3;">(fetch)</div>
<div class="t" style="left:1252.50px;top:9.00px;font-size:13.75px;line-height:15px;letter-spacing:0.141px;color:#b1b1b3;">json</div>
<div class="t" style="left:1366.70px;top:9.00px;font-size:13.75px;line-height:15px;letter-spacing:-0.100px;color:#b1b1b3;">2.59 kB</div>
<div class="t" style="left:1592.90px;top:9.00px;font-size:13.75px;line-height:15px;letter-spacing:-0.100px;color:#b1b1b3;">2.10 kB</div>
</div>
<div class="row odd" style="top:209px"><div class="badge" style="top:8px"></div>
<div class="t" style="left:7.00px;top:10.00px;font-size:12.35px;line-height:14px;letter-spacing:0.218px;color:#0c0c0d;font-family:&quot;DejaVu Sans Mono&quot;,monospace;">200</div>
<div class="t" style="left:118.04px;top:9.00px;font-size:13.75px;line-height:15px;transform:scaleX(0.8640);transform-origin:0 0;color:#b1b1b3;">POST</div>
<svg class="abs" style="left:232px;top:6.699999999999989px" width="12" height="16" viewBox="0 0 12 16"><path d="M2.600 7V4.700a3.400 3.400 0 0 1 6.800 0V7" fill="none" stroke="#8f8f93" stroke-width="2.200"/><rect x="0" y="6.500" width="12" height="9" rx="1.600" fill="#8f8f93"/></svg>
<div class="t" style="left:458.00px;top:9.00px;font-size:13.75px;line-height:15px;letter-spacing:0.164px;color:#b1b1b3;">graphql</div>
<div class="t" style="left:1026.90px;top:9.00px;font-size:13.75px;line-height:15px;letter-spacing:-0.075px;color:#4a9ff0;text-decoration:underline;text-underline-offset:1.500px;">front-MMSRVFC7.js:63</div>
<div class="t" style="left:1172.70px;top:9.00px;font-size:13.75px;line-height:15px;letter-spacing:-0.231px;color:#b1b1b3;">(fetch)</div>
<div class="t" style="left:1252.50px;top:9.00px;font-size:13.75px;line-height:15px;letter-spacing:0.141px;color:#b1b1b3;">json</div>
<div class="t" style="left:1366.70px;top:9.00px;font-size:13.75px;line-height:15px;letter-spacing:-0.100px;color:#b1b1b3;">864 B</div>
<div class="t" style="left:1592.90px;top:9.00px;font-size:13.75px;line-height:15px;letter-spacing:-0.100px;color:#b1b1b3;">373 B</div>
</div>
<div class="row" style="top:239px"><div class="badge" style="top:8px"></div>
<div class="t" style="left:7.00px;top:10.00px;font-size:12.35px;line-height:14px;letter-spacing:0.218px;color:#0c0c0d;font-family:&quot;DejaVu Sans Mono&quot;,monospace;">200</div>
<div class="t" style="left:118.04px;top:9.00px;font-size:13.75px;line-height:15px;transform:scaleX(0.8640);transform-origin:0 0;color:#b1b1b3;">POST</div>
<svg class="abs" style="left:232px;top:6.699999999999989px" width="12" height="16" viewBox="0 0 12 16"><path d="M2.600 7V4.700a3.400 3.400 0 0 1 6.800 0V7" fill="none" stroke="#8f8f93" stroke-width="2.200"/><rect x="0" y="6.500" width="12" height="9" rx="1.600" fill="#8f8f93"/></svg>
<div class="t" style="left:458.00px;top:9.00px;font-size:13.75px;line-height:15px;letter-spacing:0.164px;color:#b1b1b3;">graphql</div>
<div class="t" style="left:1026.90px;top:9.00px;font-size:13.75px;line-height:15px;letter-spacing:-0.075px;color:#4a9ff0;text-decoration:underline;text-underline-offset:1.500px;">front-MMSRVFC7.js:63</div>
<div class="t" style="left:1172.70px;top:9.00px;font-size:13.75px;line-height:15px;letter-spacing:-0.231px;color:#b1b1b3;">(fetch)</div>
<div class="t" style="left:1252.50px;top:9.00px;font-size:13.75px;line-height:15px;letter-spacing:0.141px;color:#b1b1b3;">json</div>
<div class="t" style="left:1367.70px;top:9.00px;font-size:13.75px;line-height:15px;letter-spacing:-0.100px;color:#b1b1b3;">1.18 kB</div>
<div class="t" style="left:1592.90px;top:9.00px;font-size:13.75px;line-height:15px;letter-spacing:-0.100px;color:#b1b1b3;">687 B</div>
</div>
<div class="row odd" style="top:269px"><div class="badge" style="top:8px"></div>
<div class="t" style="left:7.00px;top:10.00px;font-size:12.35px;line-height:14px;letter-spacing:0.218px;color:#0c0c0d;font-family:&quot;DejaVu Sans Mono&quot;,monospace;">200</div>
<div class="t" style="left:118.04px;top:9.00px;font-size:13.75px;line-height:15px;transform:scaleX(0.8640);transform-origin:0 0;color:#b1b1b3;">POST</div>
<svg class="abs" style="left:232px;top:6.699999999999989px" width="12" height="16" viewBox="0 0 12 16"><path d="M2.600 7V4.700a3.400 3.400 0 0 1 6.800 0V7" fill="none" stroke="#8f8f93" stroke-width="2.200"/><rect x="0" y="6.500" width="12" height="9" rx="1.600" fill="#8f8f93"/></svg>
<div class="t" style="left:458.00px;top:9.00px;font-size:13.75px;line-height:15px;letter-spacing:0.164px;color:#b1b1b3;">graphql</div>
<div class="t" style="left:1026.90px;top:9.00px;font-size:13.75px;line-height:15px;letter-spacing:-0.075px;color:#4a9ff0;text-decoration:underline;text-underline-offset:1.500px;">front-MMSRVFC7.js:63</div>
<div class="t" style="left:1172.70px;top:9.00px;font-size:13.75px;line-height:15px;letter-spacing:-0.231px;color:#b1b1b3;">(fetch)</div>
<div class="t" style="left:1252.50px;top:9.00px;font-size:13.75px;line-height:15px;letter-spacing:0.141px;color:#b1b1b3;">json</div>
<div class="t" style="left:1366.70px;top:9.00px;font-size:13.75px;line-height:15px;letter-spacing:-0.100px;color:#b1b1b3;">581 B</div>
<div class="t" style="left:1592.90px;top:9.00px;font-size:13.75px;line-height:15px;letter-spacing:-0.100px;color:#b1b1b3;">92 B</div>
</div>
<div class="row" style="top:299px"><div class="badge" style="top:8px"></div>
<div class="t" style="left:7.00px;top:10.00px;font-size:12.35px;line-height:14px;letter-spacing:0.218px;color:#0c0c0d;font-family:&quot;DejaVu Sans Mono&quot;,monospace;">200</div>
<div class="t" style="left:118.04px;top:9.00px;font-size:13.75px;line-height:15px;transform:scaleX(0.8640);transform-origin:0 0;color:#b1b1b3;">POST</div>
<svg class="abs" style="left:232px;top:6.699999999999989px" width="12" height="16" viewBox="0 0 12 16"><path d="M2.600 7V4.700a3.400 3.400 0 0 1 6.800 0V7" fill="none" stroke="#8f8f93" stroke-width="2.200"/><rect x="0" y="6.500" width="12" height="9" rx="1.600" fill="#8f8f93"/></svg>
<div class="t" style="left:458.00px;top:9.00px;font-size:13.75px;line-height:15px;letter-spacing:0.164px;color:#b1b1b3;">graphql</div>
<div class="t" style="left:1026.90px;top:9.00px;font-size:13.75px;line-height:15px;letter-spacing:-0.075px;color:#4a9ff0;text-decoration:underline;text-underline-offset:1.500px;">front-MMSRVFC7.js:63</div>
<div class="t" style="left:1172.70px;top:9.00px;font-size:13.75px;line-height:15px;letter-spacing:-0.231px;color:#b1b1b3;">(fetch)</div>
<div class="t" style="left:1252.50px;top:9.00px;font-size:13.75px;line-height:15px;letter-spacing:0.141px;color:#b1b1b3;">json</div>
<div class="t" style="left:1367.70px;top:9.00px;font-size:13.75px;line-height:15px;letter-spacing:-0.100px;color:#b1b1b3;">1.73 kB</div>
<div class="t" style="left:1593.90px;top:9.00px;font-size:13.75px;line-height:15px;letter-spacing:-0.100px;color:#b1b1b3;">1.24 kB</div>
</div>
<div class="row odd" style="top:329px"><div class="badge" style="top:8px"></div>
<div class="t" style="left:7.00px;top:10.00px;font-size:12.35px;line-height:14px;letter-spacing:0.218px;color:#0c0c0d;font-family:&quot;DejaVu Sans Mono&quot;,monospace;">200</div>
<div class="t" style="left:118.04px;top:9.00px;font-size:13.75px;line-height:15px;transform:scaleX(0.8640);transform-origin:0 0;color:#b1b1b3;">POST</div>
<svg class="abs" style="left:232px;top:6.7000000000000455px" width="12" height="16" viewBox="0 0 12 16"><path d="M2.600 7V4.700a3.400 3.400 0 0 1 6.800 0V7" fill="none" stroke="#8f8f93" stroke-width="2.200"/><rect x="0" y="6.500" width="12" height="9" rx="1.600" fill="#8f8f93"/></svg>
<div class="t" style="left:458.00px;top:9.00px;font-size:13.75px;line-height:15px;letter-spacing:0.164px;color:#b1b1b3;">graphql</div>
<div class="t" style="left:1026.90px;top:9.00px;font-size:13.75px;line-height:15px;letter-spacing:-0.075px;color:#4a9ff0;text-decoration:underline;text-underline-offset:1.500px;">front-MMSRVFC7.js:63</div>
<div class="t" style="left:1172.70px;top:9.00px;font-size:13.75px;line-height:15px;letter-spacing:-0.231px;color:#b1b1b3;">(fetch)</div>
<div class="t" style="left:1252.50px;top:9.00px;font-size:13.75px;line-height:15px;letter-spacing:0.141px;color:#b1b1b3;">json</div>
<div class="t" style="left:1367.70px;top:9.00px;font-size:13.75px;line-height:15px;letter-spacing:-0.100px;color:#b1b1b3;">1.48 kB</div>
<div class="t" style="left:1592.90px;top:9.00px;font-size:13.75px;line-height:15px;letter-spacing:-0.100px;color:#b1b1b3;">985 B</div>
</div>
<div class="row" style="top:359px"><div class="badge" style="top:8px"></div>
<div class="t" style="left:7.00px;top:10.00px;font-size:12.35px;line-height:14px;letter-spacing:0.218px;color:#0c0c0d;font-family:&quot;DejaVu Sans Mono&quot;,monospace;">200</div>
<div class="t" style="left:118.04px;top:9.00px;font-size:13.75px;line-height:15px;transform:scaleX(0.8640);transform-origin:0 0;color:#b1b1b3;">POST</div>
<svg class="abs" style="left:232px;top:6.7000000000000455px" width="12" height="16" viewBox="0 0 12 16"><path d="M2.600 7V4.700a3.400 3.400 0 0 1 6.800 0V7" fill="none" stroke="#8f8f93" stroke-width="2.200"/><rect x="0" y="6.500" width="12" height="9" rx="1.600" fill="#8f8f93"/></svg>
<div class="t" style="left:458.00px;top:9.00px;font-size:13.75px;line-height:15px;letter-spacing:0.164px;color:#b1b1b3;">graphql</div>
<div class="t" style="left:1026.90px;top:9.00px;font-size:13.75px;line-height:15px;letter-spacing:-0.075px;color:#4a9ff0;text-decoration:underline;text-underline-offset:1.500px;">front-MMSRVFC7.js:63</div>
<div class="t" style="left:1172.70px;top:9.00px;font-size:13.75px;line-height:15px;letter-spacing:-0.231px;color:#b1b1b3;">(fetch)</div>
<div class="t" style="left:1252.50px;top:9.00px;font-size:13.75px;line-height:15px;letter-spacing:0.141px;color:#b1b1b3;">json</div>
<div class="t" style="left:1366.70px;top:9.00px;font-size:13.75px;line-height:15px;letter-spacing:-0.100px;color:#b1b1b3;">569 B</div>
<div class="t" style="left:1592.90px;top:9.00px;font-size:13.75px;line-height:15px;letter-spacing:-0.100px;color:#b1b1b3;">80 B</div>
</div>
<div class="row odd" style="top:389px"><div class="badge" style="top:8px"></div>
<div class="t" style="left:7.00px;top:10.00px;font-size:12.35px;line-height:14px;letter-spacing:0.218px;color:#0c0c0d;font-family:&quot;DejaVu Sans Mono&quot;,monospace;">200</div>
<div class="t" style="left:118.04px;top:9.00px;font-size:13.75px;line-height:15px;transform:scaleX(0.8640);transform-origin:0 0;color:#b1b1b3;">POST</div>
<svg class="abs" style="left:232px;top:6.7000000000000455px" width="12" height="16" viewBox="0 0 12 16"><path d="M2.600 7V4.700a3.400 3.400 0 0 1 6.800 0V7" fill="none" stroke="#8f8f93" stroke-width="2.200"/><rect x="0" y="6.500" width="12" height="9" rx="1.600" fill="#8f8f93"/></svg>
<div class="t" style="left:458.00px;top:9.00px;font-size:13.75px;line-height:15px;letter-spacing:0.164px;color:#b1b1b3;">graphql</div>
<div class="t" style="left:1026.90px;top:9.00px;font-size:13.75px;line-height:15px;letter-spacing:-0.075px;color:#4a9ff0;text-decoration:underline;text-underline-offset:1.500px;">front-MMSRVFC7.js:63</div>
<div class="t" style="left:1172.70px;top:9.00px;font-size:13.75px;line-height:15px;letter-spacing:-0.231px;color:#b1b1b3;">(fetch)</div>
<div class="t" style="left:1252.50px;top:9.00px;font-size:13.75px;line-height:15px;letter-spacing:0.141px;color:#b1b1b3;">json</div>
<div class="t" style="left:1366.70px;top:9.00px;font-size:13.75px;line-height:15px;letter-spacing:-0.100px;color:#b1b1b3;">517 B</div>
<div class="t" style="left:1592.90px;top:9.00px;font-size:13.75px;line-height:15px;letter-spacing:-0.100px;color:#b1b1b3;">28 B</div>
</div>
<div class="row" style="top:419px"><div class="badge" style="top:8px"></div>
<div class="t" style="left:7.00px;top:10.00px;font-size:12.35px;line-height:14px;letter-spacing:0.218px;color:#0c0c0d;font-family:&quot;DejaVu Sans Mono&quot;,monospace;">200</div>
<div class="t" style="left:118.04px;top:9.00px;font-size:13.75px;line-height:15px;transform:scaleX(0.8640);transform-origin:0 0;color:#b1b1b3;">POST</div>
<svg class="abs" style="left:232px;top:6.7000000000000455px" width="12" height="16" viewBox="0 0 12 16"><path d="M2.600 7V4.700a3.400 3.400 0 0 1 6.800 0V7" fill="none" stroke="#8f8f93" stroke-width="2.200"/><rect x="0" y="6.500" width="12" height="9" rx="1.600" fill="#8f8f93"/></svg>
<div class="t" style="left:458.00px;top:9.00px;font-size:13.75px;line-height:15px;letter-spacing:0.164px;color:#b1b1b3;">graphql</div>
<div class="t" style="left:1026.90px;top:9.00px;font-size:13.75px;line-height:15px;letter-spacing:-0.075px;color:#4a9ff0;text-decoration:underline;text-underline-offset:1.500px;">front-MMSRVFC7.js:63</div>
<div class="t" style="left:1172.70px;top:9.00px;font-size:13.75px;line-height:15px;letter-spacing:-0.231px;color:#b1b1b3;">(fetch)</div>
<div class="t" style="left:1252.50px;top:9.00px;font-size:13.75px;line-height:15px;letter-spacing:0.141px;color:#b1b1b3;">json</div>
<div class="t" style="left:1366.70px;top:9.00px;font-size:13.75px;line-height:15px;letter-spacing:-0.100px;color:#b1b1b3;">526 B</div>
<div class="t" style="left:1592.90px;top:9.00px;font-size:13.75px;line-height:15px;letter-spacing:-0.100px;color:#b1b1b3;">37 B</div>
</div>
<div class="row odd" style="top:449px"><div class="badge" style="top:8px"></div>
<div class="t" style="left:7.00px;top:10.00px;font-size:12.35px;line-height:14px;letter-spacing:0.218px;color:#0c0c0d;font-family:&quot;DejaVu Sans Mono&quot;,monospace;">200</div>
<div class="t" style="left:118.04px;top:9.00px;font-size:13.75px;line-height:15px;transform:scaleX(0.8640);transform-origin:0 0;color:#b1b1b3;">POST</div>
<svg class="abs" style="left:232px;top:6.7000000000000455px" width="12" height="16" viewBox="0 0 12 16"><path d="M2.600 7V4.700a3.400 3.400 0 0 1 6.800 0V7" fill="none" stroke="#8f8f93" stroke-width="2.200"/><rect x="0" y="6.500" width="12" height="9" rx="1.600" fill="#8f8f93"/></svg>
<div class="t" style="left:458.00px;top:9.00px;font-size:13.75px;line-height:15px;letter-spacing:0.164px;color:#b1b1b3;">graphql</div>
<div class="t" style="left:1026.90px;top:9.00px;font-size:13.75px;line-height:15px;letter-spacing:-0.075px;color:#4a9ff0;text-decoration:underline;text-underline-offset:1.500px;">front-MMSRVFC7.js:63</div>
<div class="t" style="left:1172.70px;top:9.00px;font-size:13.75px;line-height:15px;letter-spacing:-0.231px;color:#b1b1b3;">(fetch)</div>
<div class="t" style="left:1252.50px;top:9.00px;font-size:13.75px;line-height:15px;letter-spacing:0.141px;color:#b1b1b3;">json</div>
<div class="t" style="left:1366.70px;top:9.00px;font-size:13.75px;line-height:15px;letter-spacing:-0.100px;color:#b1b1b3;">750 B</div>
<div class="t" style="left:1592.90px;top:9.00px;font-size:13.75px;line-height:15px;letter-spacing:-0.100px;color:#b1b1b3;">259 B</div>
</div>
<div class="row" style="top:479px"><div class="badge" style="top:8px"></div>
<div class="t" style="left:7.00px;top:10.00px;font-size:12.35px;line-height:14px;letter-spacing:0.218px;color:#0c0c0d;font-family:&quot;DejaVu Sans Mono&quot;,monospace;">200</div>
<div class="t" style="left:118.04px;top:9.00px;font-size:13.75px;line-height:15px;transform:scaleX(0.8640);transform-origin:0 0;color:#b1b1b3;">POST</div>
<svg class="abs" style="left:232px;top:6.7000000000000455px" width="12" height="16" viewBox="0 0 12 16"><path d="M2.600 7V4.700a3.400 3.400 0 0 1 6.800 0V7" fill="none" stroke="#8f8f93" stroke-width="2.200"/><rect x="0" y="6.500" width="12" height="9" rx="1.600" fill="#8f8f93"/></svg>
<div class="t" style="left:250.20px;top:9.00px;font-size:13.75px;line-height:15px;letter-spacing:-0.025px;color:#b1b1b3;">testing.octi.staging.filigran.io</div>
<div class="t" style="left:458.00px;top:9.00px;font-size:13.75px;line-height:15px;letter-spacing:0.164px;color:#b1b1b3;">graphql</div>
<div class="t" style="left:1026.90px;top:9.00px;font-size:13.75px;line-height:15px;letter-spacing:-0.075px;color:#4a9ff0;text-decoration:underline;text-underline-offset:1.500px;">front-MMSRVFC7.js:63</div>
<div class="t" style="left:1172.70px;top:9.00px;font-size:13.75px;line-height:15px;letter-spacing:-0.231px;color:#b1b1b3;">(fetch)</div>
<div class="t" style="left:1252.50px;top:9.00px;font-size:13.75px;line-height:15px;letter-spacing:0.141px;color:#b1b1b3;">json</div>
<div class="t" style="left:1366.70px;top:9.00px;font-size:13.75px;line-height:15px;letter-spacing:-0.100px;color:#b1b1b3;">752 B</div>
<div class="t" style="left:1592.90px;top:9.00px;font-size:13.75px;line-height:15px;letter-spacing:-0.100px;color:#b1b1b3;">261 B</div>
</div>
<div class="row odd" style="top:509px"><div class="badge" style="top:8px"></div>
<div class="t" style="left:7.00px;top:10.00px;font-size:12.35px;line-height:14px;letter-spacing:0.218px;color:#0c0c0d;font-family:&quot;DejaVu Sans Mono&quot;,monospace;">200</div>
<div class="t" style="left:118.04px;top:9.00px;font-size:13.75px;line-height:15px;transform:scaleX(0.8640);transform-origin:0 0;color:#b1b1b3;">POST</div>
<svg class="abs" style="left:232px;top:6.7000000000000455px" width="12" height="16" viewBox="0 0 12 16"><path d="M2.600 7V4.700a3.400 3.400 0 0 1 6.800 0V7" fill="none" stroke="#8f8f93" stroke-width="2.200"/><rect x="0" y="6.500" width="12" height="9" rx="1.600" fill="#8f8f93"/></svg>
<div class="t" style="left:250.20px;top:9.00px;font-size:13.75px;line-height:15px;letter-spacing:-0.025px;color:#b1b1b3;">testing.octi.staging.filigran.io</div>
<div class="t" style="left:458.00px;top:9.00px;font-size:13.75px;line-height:15px;letter-spacing:0.164px;color:#b1b1b3;">graphql</div>
<div class="t" style="left:1026.90px;top:9.00px;font-size:13.75px;line-height:15px;letter-spacing:-0.075px;color:#4a9ff0;text-decoration:underline;text-underline-offset:1.500px;">front-MMSRVFC7.js:63</div>
<div class="t" style="left:1172.70px;top:9.00px;font-size:13.75px;line-height:15px;letter-spacing:-0.231px;color:#b1b1b3;">(fetch)</div>
<div class="t" style="left:1252.50px;top:9.00px;font-size:13.75px;line-height:15px;letter-spacing:0.141px;color:#b1b1b3;">json</div>
<div class="t" style="left:1366.70px;top:9.00px;font-size:13.75px;line-height:15px;letter-spacing:-0.100px;color:#b1b1b3;">864 B</div>
<div class="t" style="left:1592.90px;top:9.00px;font-size:13.75px;line-height:15px;letter-spacing:-0.100px;color:#b1b1b3;">373 B</div>
</div>
<div class="row" style="top:539px"><div class="badge" style="top:8px"></div>
<div class="t" style="left:7.00px;top:10.00px;font-size:12.35px;line-height:14px;letter-spacing:0.218px;color:#0c0c0d;font-family:&quot;DejaVu Sans Mono&quot;,monospace;">200</div>
<div class="t" style="left:118.04px;top:9.00px;font-size:13.75px;line-height:15px;transform:scaleX(0.8640);transform-origin:0 0;color:#b1b1b3;">POST</div>
<svg class="abs" style="left:232px;top:6.7000000000000455px" width="12" height="16" viewBox="0 0 12 16"><path d="M2.600 7V4.700a3.400 3.400 0 0 1 6.800 0V7" fill="none" stroke="#8f8f93" stroke-width="2.200"/><rect x="0" y="6.500" width="12" height="9" rx="1.600" fill="#8f8f93"/></svg>
<div class="t" style="left:250.20px;top:9.00px;font-size:13.75px;line-height:15px;letter-spacing:-0.025px;color:#b1b1b3;">testing.octi.staging.filigran.io</div>
<div class="t" style="left:458.00px;top:9.00px;font-size:13.75px;line-height:15px;letter-spacing:0.164px;color:#b1b1b3;">graphql</div>
<div class="t" style="left:1026.90px;top:9.00px;font-size:13.75px;line-height:15px;letter-spacing:-0.075px;color:#4a9ff0;text-decoration:underline;text-underline-offset:1.500px;">front-MMSRVFC7.js:63</div>
<div class="t" style="left:1172.70px;top:9.00px;font-size:13.75px;line-height:15px;letter-spacing:-0.231px;color:#b1b1b3;">(fetch)</div>
<div class="t" style="left:1252.50px;top:9.00px;font-size:13.75px;line-height:15px;letter-spacing:0.141px;color:#b1b1b3;">json</div>
<div class="t" style="left:1366.70px;top:9.00px;font-size:13.75px;line-height:15px;letter-spacing:-0.100px;color:#b1b1b3;">864 B</div>
<div class="t" style="left:1592.90px;top:9.00px;font-size:13.75px;line-height:15px;letter-spacing:-0.100px;color:#b1b1b3;">373 B</div>
</div>
<div class="row odd" style="top:569px"><div class="badge" style="top:8px"></div>
<div class="t" style="left:7.00px;top:10.00px;font-size:12.35px;line-height:14px;letter-spacing:0.218px;color:#0c0c0d;font-family:&quot;DejaVu Sans Mono&quot;,monospace;">200</div>
<div class="t" style="left:118.04px;top:9.00px;font-size:13.75px;line-height:15px;transform:scaleX(0.8640);transform-origin:0 0;color:#b1b1b3;">POST</div>
<svg class="abs" style="left:232px;top:6.7000000000000455px" width="12" height="16" viewBox="0 0 12 16"><path d="M2.600 7V4.700a3.400 3.400 0 0 1 6.800 0V7" fill="none" stroke="#8f8f93" stroke-width="2.200"/><rect x="0" y="6.500" width="12" height="9" rx="1.600" fill="#8f8f93"/></svg>
<div class="t" style="left:250.20px;top:9.00px;font-size:13.75px;line-height:15px;letter-spacing:-0.025px;color:#b1b1b3;">testing.octi.staging.filigran.io</div>
<div class="t" style="left:458.00px;top:9.00px;font-size:13.75px;line-height:15px;letter-spacing:0.164px;color:#b1b1b3;">graphql</div>
<div class="t" style="left:1026.90px;top:9.00px;font-size:13.75px;line-height:15px;letter-spacing:-0.075px;color:#4a9ff0;text-decoration:underline;text-underline-offset:1.500px;">front-MMSRVFC7.js:63</div>
<div class="t" style="left:1172.70px;top:9.00px;font-size:13.75px;line-height:15px;letter-spacing:-0.231px;color:#b1b1b3;">(fetch)</div>
<div class="t" style="left:1252.50px;top:9.00px;font-size:13.75px;line-height:15px;letter-spacing:0.141px;color:#b1b1b3;">json</div>
<div class="t" style="left:1366.70px;top:9.00px;font-size:13.75px;line-height:15px;letter-spacing:-0.100px;color:#b1b1b3;">864 B</div>
<div class="t" style="left:1592.90px;top:9.00px;font-size:13.75px;line-height:15px;letter-spacing:-0.100px;color:#b1b1b3;">373 B</div>
</div>
<div class="row" style="top:599px"><div class="badge" style="top:8px"></div>
<div class="t" style="left:7.00px;top:10.00px;font-size:12.35px;line-height:14px;letter-spacing:0.218px;color:#0c0c0d;font-family:&quot;DejaVu Sans Mono&quot;,monospace;">200</div>
<div class="t" style="left:118.04px;top:9.00px;font-size:13.75px;line-height:15px;transform:scaleX(0.8640);transform-origin:0 0;color:#b1b1b3;">POST</div>
<svg class="abs" style="left:232px;top:6.7000000000000455px" width="12" height="16" viewBox="0 0 12 16"><path d="M2.600 7V4.700a3.400 3.400 0 0 1 6.800 0V7" fill="none" stroke="#8f8f93" stroke-width="2.200"/><rect x="0" y="6.500" width="12" height="9" rx="1.600" fill="#8f8f93"/></svg>
<div class="t" style="left:250.20px;top:9.00px;font-size:13.75px;line-height:15px;letter-spacing:-0.025px;color:#b1b1b3;">testing.octi.staging.filigran.io</div>
<div class="t" style="left:458.00px;top:9.00px;font-size:13.75px;line-height:15px;letter-spacing:0.164px;color:#b1b1b3;">graphql</div>
<div class="t" style="left:1026.90px;top:9.00px;font-size:13.75px;line-height:15px;letter-spacing:-0.075px;color:#4a9ff0;text-decoration:underline;text-underline-offset:1.500px;">front-MMSRVFC7.js:63</div>
<div class="t" style="left:1172.70px;top:9.00px;font-size:13.75px;line-height:15px;letter-spacing:-0.231px;color:#b1b1b3;">(fetch)</div>
<div class="t" style="left:1252.50px;top:9.00px;font-size:13.75px;line-height:15px;letter-spacing:0.141px;color:#b1b1b3;">json</div>
<div class="t" style="left:1366.70px;top:9.00px;font-size:13.75px;line-height:15px;letter-spacing:-0.100px;color:#b1b1b3;">864 B</div>
<div class="t" style="left:1592.90px;top:9.00px;font-size:13.75px;line-height:15px;letter-spacing:-0.100px;color:#b1b1b3;">373 B</div>
</div>
<div class="row odd" style="top:629px"><div class="badge" style="top:8px"></div>
<div class="t" style="left:7.00px;top:10.00px;font-size:12.35px;line-height:14px;letter-spacing:0.218px;color:#0c0c0d;font-family:&quot;DejaVu Sans Mono&quot;,monospace;">200</div>
<div class="t" style="left:118.04px;top:9.00px;font-size:13.75px;line-height:15px;transform:scaleX(0.8640);transform-origin:0 0;color:#b1b1b3;">POST</div>
<svg class="abs" style="left:232px;top:6.7000000000000455px" width="12" height="16" viewBox="0 0 12 16"><path d="M2.600 7V4.700a3.400 3.400 0 0 1 6.800 0V7" fill="none" stroke="#8f8f93" stroke-width="2.200"/><rect x="0" y="6.500" width="12" height="9" rx="1.600" fill="#8f8f93"/></svg>
<div class="t" style="left:250.20px;top:9.00px;font-size:13.75px;line-height:15px;letter-spacing:-0.025px;color:#b1b1b3;">testing.octi.staging.filigran.io</div>
<div class="t" style="left:458.00px;top:9.00px;font-size:13.75px;line-height:15px;letter-spacing:0.164px;color:#b1b1b3;">graphql</div>
<div class="t" style="left:1026.90px;top:9.00px;font-size:13.75px;line-height:15px;letter-spacing:-0.075px;color:#4a9ff0;text-decoration:underline;text-underline-offset:1.500px;">front-MMSRVFC7.js:63</div>
<div class="t" style="left:1172.70px;top:9.00px;font-size:13.75px;line-height:15px;letter-spacing:-0.231px;color:#b1b1b3;">(fetch)</div>
<div class="t" style="left:1252.50px;top:9.00px;font-size:13.75px;line-height:15px;letter-spacing:0.141px;color:#b1b1b3;">json</div>
<div class="t" style="left:1366.70px;top:9.00px;font-size:13.75px;line-height:15px;letter-spacing:-0.100px;color:#b1b1b3;">864 B</div>
<div class="t" style="left:1592.90px;top:9.00px;font-size:13.75px;line-height:15px;letter-spacing:-0.100px;color:#b1b1b3;">373 B</div>
</div>
<div class="abs" style="left:111px;top:0;width:1px;height:635px;background:rgba(255,255,255,.07)"></div>
<div class="abs" style="left:224px;top:0;width:1px;height:635px;background:rgba(255,255,255,.07)"></div>
<div class="abs" style="left:451px;top:0;width:1px;height:635px;background:rgba(255,255,255,.07)"></div>
<div class="abs" style="left:1020px;top:0;width:1px;height:635px;background:rgba(255,255,255,.07)"></div>
<div class="abs" style="left:1246px;top:0;width:1px;height:635px;background:rgba(255,255,255,.07)"></div>
<div class="abs" style="left:1359px;top:0;width:1px;height:635px;background:rgba(255,255,255,.07)"></div>
<div class="abs" style="left:1586px;top:0;width:1px;height:635px;background:rgba(255,255,255,.07)"></div>
<div class="abs" style="left:0;top:0;width:1698px;height:31px;background:#18181a;z-index:3">
<div class="abs" style="left:0;top:30px;width:1698px;height:1px;background:#38383d"></div>
<div class="abs" style="left:111px;top:0;width:1px;height:30px;background:#38383d"></div>
<div class="abs" style="left:224px;top:0;width:1px;height:30px;background:#38383d"></div>
<div class="abs" style="left:451px;top:0;width:1px;height:30px;background:#38383d"></div>
<div class="abs" style="left:1020px;top:0;width:1px;height:30px;background:#38383d"></div>
<div class="abs" style="left:1246px;top:0;width:1px;height:30px;background:#38383d"></div>
<div class="abs" style="left:1359px;top:0;width:1px;height:30px;background:#38383d"></div>
<div class="abs" style="left:1586px;top:0;width:1px;height:30px;background:#38383d"></div>
<div class="t" style="left:3.30px;top:10.00px;font-size:13.75px;line-height:15px;letter-spacing:-0.341px;color:#b1b1b3;">Status</div>
<div class="t" style="left:117.10px;top:10.00px;font-size:13.75px;line-height:15px;transform:scaleX(1.0992);transform-origin:0 0;color:#b1b1b3;">Method</div>
<div class="t" style="left:230.30px;top:10.00px;font-size:13.75px;line-height:15px;letter-spacing:0.313px;color:#b1b1b3;">Domain</div>
<div class="t" style="left:457.28px;top:10.00px;font-size:13.75px;line-height:15px;transform:scaleX(0.9206);transform-origin:0 0;color:#b1b1b3;">File</div>
<div class="t" style="left:1026.50px;top:10.00px;font-size:13.75px;line-height:15px;letter-spacing:0.361px;color:#b1b1b3;">Initiator</div>
<div class="t" style="left:1253.30px;top:10.00px;font-size:13.75px;line-height:15px;transform:scaleX(0.9117);transform-origin:0 0;color:#b1b1b3;">Type</div>
<div class="t" style="left:1367.30px;top:10.00px;font-size:13.75px;line-height:15px;letter-spacing:-0.281px;color:#b1b1b3;">Transferred</div>
<div class="t" style="left:1593.60px;top:10.00px;font-size:13.75px;line-height:15px;transform:scaleX(0.8265);transform-origin:0 0;color:#b1b1b3;">Size</div>
</div>
<div class="abs" style="left:244px;top:33px;width:179px;height:443px;background:#848484;z-index:3"></div>
<div class="abs" style="left:1693px;top:185px;width:3px;height:363px;background:#78787a;border-radius:2px"></div>
</div>
<div class="abs" style="left:0;top:710px;width:1698px;height:30px;background:#18181a">
<div class="abs" style="left:0;top:0;width:1698px;height:1px;background:#38383d"></div>
<div class="abs" style="left:2px;top:4px;width:33px;height:25px;background:#39393e;border-radius:3px"></div>
<svg class="abs" style="left:8px;top:5px" width="20" height="22" viewBox="0 0 20 22" fill="none" stroke="#8a8a8e" stroke-width="2"><circle cx="10" cy="12.500" r="8"/><path d="M7 1.500h6M10 1.500v3M10 12.500l3-3.500" stroke-linecap="round"/></svg>
<div class="t" style="left:48.60px;top:10.00px;font-size:13.75px;line-height:15px;letter-spacing:-0.068px;color:#b1b1b3;">33 requests</div>
<div class="t" style="left:147.60px;top:10.00px;font-size:13.75px;line-height:15px;letter-spacing:0.087px;color:#b1b1b3;">33.93 MB / 131.26 kB transferred</div>
<div class="t" style="left:378.30px;top:10.00px;font-size:13.75px;line-height:15px;letter-spacing:-0.132px;color:#b1b1b3;">Finish: 42.54 s</div>
<div class="t" style="left:491.00px;top:10.00px;font-size:13.75px;line-height:15px;letter-spacing:0.131px;color:#75bfff;">DOMContentLoaded: 157 ms</div>
<div class="t" style="left:700.00px;top:10.00px;font-size:13.75px;line-height:15px;letter-spacing:-0.111px;color:#ff7de9;">load: 1.30 s</div>
<div class="sep" style="left:133px;top:6px;height:20px"></div>
<div class="sep" style="left:365px;top:6px;height:20px"></div>
<div class="sep" style="left:478px;top:6px;height:20px"></div>
<div class="sep" style="left:686px;top:6px;height:20px"></div>
</div>
<div class="abs" style="left:1698px;top:75px;width:2px;height:665px;background:#38383d;z-index:1"></div>
<div class="abs" style="left:1699px;top:75px;width:849px;height:665px;background:#18181a;overflow:hidden">
<div class="abs" style="left:0;top:0;width:849px;height:30px;background:#0c0c0d"></div>
<div class="abs" style="left:0;top:30px;width:849px;height:1px;background:#38383d"></div>
<svg class="abs" style="left:8.5px;top:7px" width="19" height="17" viewBox="0 0 19 17" fill="none" stroke="#b1b1b3" stroke-width="1.700" stroke-linejoin="round"><rect x="1" y="1.200" width="16.800" height="14.300" rx="1.500"/><path d="M14 1.200v14.300M5 5l5 3.300L5 11.600z"/></svg>
<div class="t" style="left:48.80px;top:7.00px;font-size:14.7px;line-height:16px;letter-spacing:-0.012px;color:#b1b1b3;">Headers</div>
<div class="t" style="left:131.20px;top:7.00px;font-size:14.7px;line-height:16px;letter-spacing:-0.153px;color:#b1b1b3;">Cookies</div>
<div class="t" style="left:209.20px;top:7.00px;font-size:14.7px;line-height:16px;letter-spacing:-0.171px;color:#fff;">Request</div>
<div class="t" style="left:289.30px;top:7.00px;font-size:14.7px;line-height:16px;letter-spacing:-0.381px;color:#b1b1b3;">Response</div>
<div class="t" style="left:380.00px;top:7.00px;font-size:14.7px;line-height:16px;letter-spacing:0.196px;color:#b1b1b3;">Timings</div>
<div class="t" style="left:459.20px;top:7.00px;font-size:14.7px;line-height:16px;letter-spacing:-0.384px;color:#b1b1b3;">Stack Trace</div>
<div class="t" style="left:560.20px;top:7.00px;font-size:14.7px;line-height:16px;letter-spacing:-0.230px;color:#b1b1b3;">Security</div>
<div class="abs" style="left:197px;top:0;width:80px;height:3px;background:#0a84ff"></div>
<div class="abs" style="left:0;top:31px;width:849px;height:30px;background:#232327"></div>
<div class="abs" style="left:0;top:61px;width:849px;height:1px;background:#38383d"></div>
<svg class="abs" style="left:10.5px;top:40px" width="14" height="14" viewBox="0 0 14 14" fill="none" stroke="#8f8f94" stroke-width="1.900" stroke-linejoin="round"><path d="M1.200 1.700h11.600L8.600 7v5.300l-3.200-1.800V7z"/></svg>
<div class="t" style="left:28.60px;top:40.00px;font-size:13.75px;line-height:15px;letter-spacing:-0.187px;color:#8f8f94;">Filter Request Parameters</div>
<div class="abs" style="left:0;top:92px;width:849px;height:1px;background:#38383d"></div>
<div class="t" style="left:6.10px;top:71.00px;font-size:13.75px;line-height:15px;transform:scaleX(0.9065);transform-origin:0 0;color:#b1b1b3;">JSON</div>
<div class="t" style="left:786.60px;top:71.00px;font-size:13.75px;line-height:15px;transform:scaleX(0.9030);transform-origin:0 0;color:#b1b1b3;">Raw</div>
<div class="abs" style="left:817px;top:69px;width:33px;height:17px;border-radius:8.500px;background:#777779"></div>
<div class="abs" style="left:819.5px;top:71.69999999999999px;width:11.500px;height:11.500px;border-radius:6px;background:#b6b6b8"></div>
<div class="t" style="left:26.20px;top:100.00px;font-size:13.75px;line-height:15px;letter-spacing:-0.151px;color:#75bfff;">id:</div>
<div class="t" style="left:45.80px;top:100.00px;font-size:13.75px;line-height:15px;letter-spacing:-0.065px;color:#ff7de9;">"RootReportQuery"</div>
<div class="t" style="left:26.20px;top:125.00px;font-size:13.75px;line-height:15px;letter-spacing:0.081px;color:#75bfff;">query:</div>
<div class="t" style="left:68.50px;top:125.00px;font-size:13.75px;line-height:15px;letter-spacing:0.065px;color:#ff7de9;">'query RootReportQuery(\n $id: String!\n) {\n report(id: $id) {\n id\n standard_id\n ...Report_report\n ...ReportDetails_report\n</div>
<div class="t" style="left:68.40px;top:145.00px;font-size:13.75px;line-height:15px;letter-spacing:-0.076px;color:#ff7de9;">...ReportKnowledge_report\n ...ContainerHeader_container\n ...ContainerStixDomainObjects_container\n</div>
<div class="t" style="left:68.40px;top:165.00px;font-size:13.75px;line-height:15px;letter-spacing:-0.065px;color:#ff7de9;">...ContainerStixCyberObservables_container\n ...StixDomainObjectContent_stixDomainObject\n ...FileImportViewer_entity\n</div>
<div class="t" style="left:68.40px;top:185.00px;font-size:13.75px;line-height:15px;letter-spacing:-0.180px;color:#ff7de9;">...FileExportViewer_entity\n ...FileExternalReferencesViewer_entity\n ...WorkbenchFileViewer_entity\n }\n connectorsFo…rvable:</div>
<div class="t" style="left:70.00px;top:205.00px;font-size:13.75px;line-height:15px;letter-spacing:0.015px;color:#ff7de9;">__typename\n observable_value\n }\n id\n }\n }\n works {\n id\n }\n ...FileWork_file\n}\n\nfragment WorkbenchFileViewer_entity</div>
<div class="t" style="left:69.40px;top:225.00px;font-size:13.75px;line-height:15px;letter-spacing:-0.007px;color:#ff7de9;">on StixCoreObject {\n __isStixCoreObject: __typename\n id\n entity_type\n pendingFiles(first: 500) {\n edges {\n node {\n id\n</div>
<div class="t" style="left:68.40px;top:245.00px;font-size:13.75px;line-height:15px;letter-spacing:0.056px;color:#ff7de9;">...WorkbenchFileLine_file\n metaData {\n mimetype\n }\n __typename\n }\n cursor\n }\n pageInfo {\n endCursor\n</div>
<div class="t" style="left:69.40px;top:265.00px;font-size:13.75px;line-height:15px;letter-spacing:0.065px;color:#ff7de9;">hasNextPage\n }\n }\n}\n'</div>
<svg class="abs" style="left:9px;top:292px" width="12" height="8" viewBox="0 0 12 8" fill="#8f8f94"><path d="M0.500 0.500h11L6 7.500z"/></svg>
<div class="t" style="left:26.20px;top:290.00px;font-size:13.75px;line-height:15px;letter-spacing:-0.203px;color:#75bfff;">variables:</div>
<div class="t" style="left:87.40px;top:290.00px;font-size:13.75px;line-height:15px;transform:scaleX(0.7540);transform-origin:0 0;color:#75bfff;">{…}</div>
<div class="t" style="left:46.20px;top:315.00px;font-size:13.75px;line-height:15px;letter-spacing:-0.151px;color:#75bfff;">id:</div>
<div class="t" style="left:65.30px;top:315.00px;font-size:13.75px;line-height:15px;letter-spacing:0.292px;color:#ff7de9;">"91f1bd49-479b-41d5-9c70-d9ed57dee5e8"</div>
</div>
<div class="red" style="left:446px;top:98px;width:69px;height:457px"></div>
<div class="red" style="left:1889px;top:67px;width:97px;height:43px"></div>
<div class="red" style="left:1696px;top:130px;width:850px;height:285px"></div>
</div>
</div></body></html>
